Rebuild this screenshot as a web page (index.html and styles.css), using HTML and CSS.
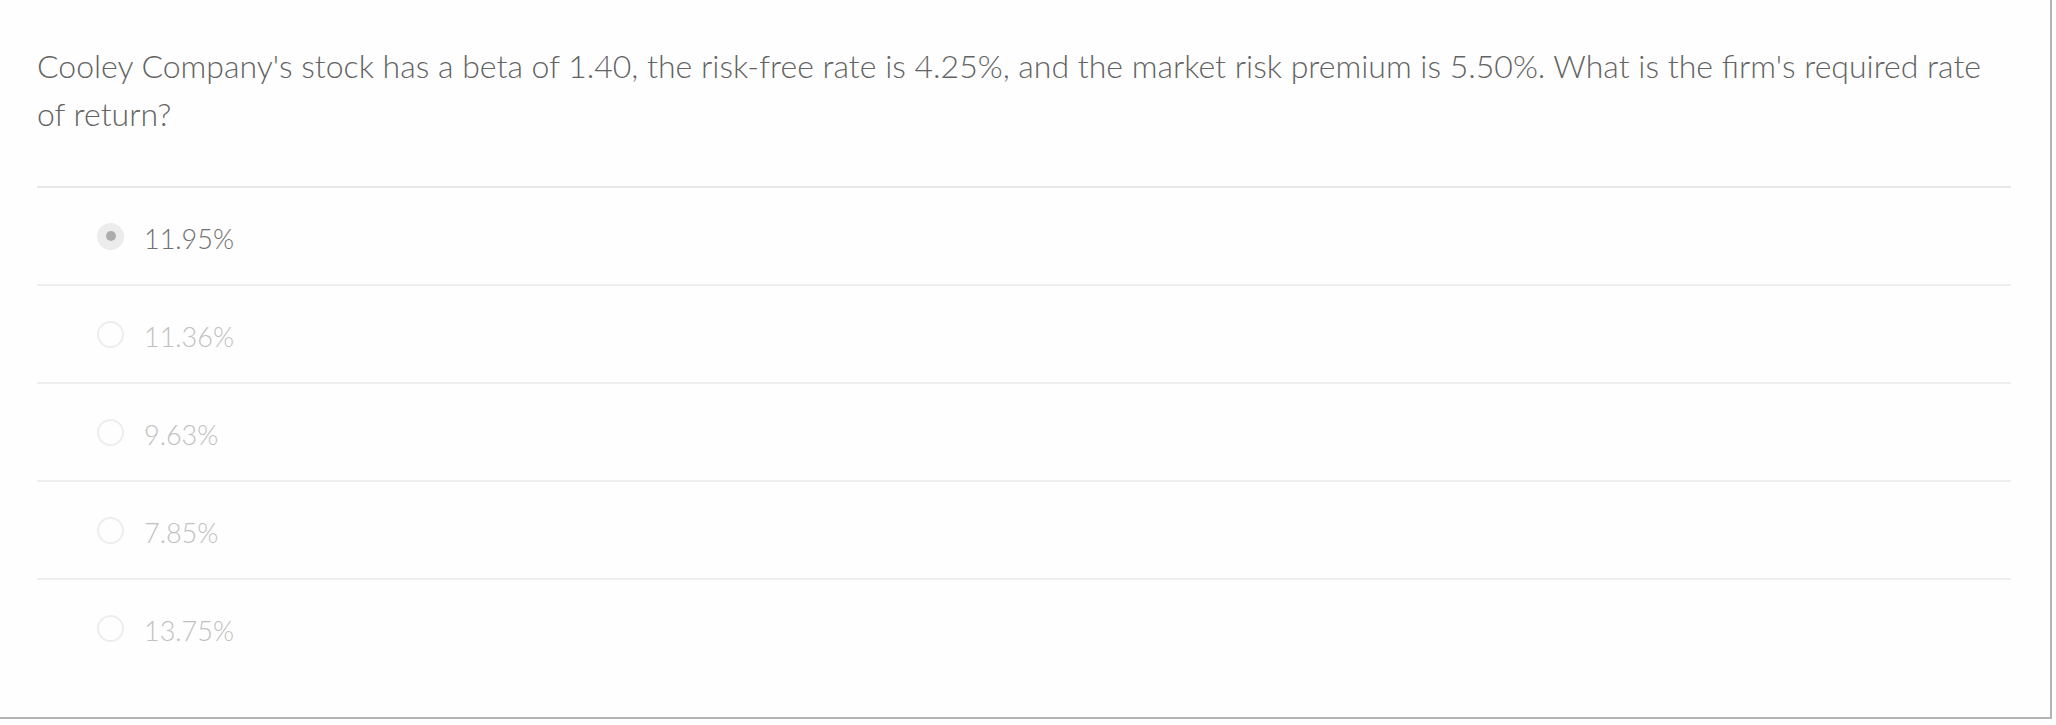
FILE: index.html
```html
<!DOCTYPE html>
<html lang="en">
<head>
<meta charset="utf-8">
<title>Question</title>
<link rel="stylesheet" href="styles.css">
</head>
<body>
<div class="frame">
  <div class="question">
    <p class="prompt">Cooley Company's stock has a beta of 1.40, the risk-free rate is 4.25%, and the market risk premium is 5.50%. What is the firm's required rate of return?</p>
    <ul class="options">
      <li class="option selected"><span class="radio"><span class="dot"></span></span><span class="label">11.95%</span></li>
      <li class="option"><span class="radio"></span><span class="label">11.36%</span></li>
      <li class="option"><span class="radio"></span><span class="label">9.63%</span></li>
      <li class="option"><span class="radio"></span><span class="label">7.85%</span></li>
      <li class="option"><span class="radio"></span><span class="label">13.75%</span></li>
    </ul>
  </div>
</div>
</body>
</html>
```
FILE: styles.css
```css
html, body {
  margin: 0;
  padding: 0;
  background: #ffffff;
}
body {
  font-family: Lato, "Open Sans", "Liberation Sans", sans-serif;
  font-weight: 300;
}
.frame {
  box-sizing: border-box;
  width: 2052px;
  height: 719px;
  background: #fefefe;
  border-right: 2px solid #b4b4b4;
  border-bottom: 2px solid #b4b4b4;
}
.question {
  padding: 42px 39px 0 37px;
}
.prompt {
  margin: 0;
  font-size: 32px;
  line-height: 48px;
  color: #636363;
  padding-bottom: 48px;
  border-bottom: 2px solid #e8e8e8;
}
.options {
  list-style: none;
  margin: 0;
  padding: 0;
}
.option {
  display: flex;
  align-items: center;
  height: 96px;
  padding-left: 60px;
  border-bottom: 2px solid #efefef;
}
.option:last-child {
  border-bottom: none;
}
.radio {
  box-sizing: border-box;
  width: 27px;
  height: 27px;
  border-radius: 50%;
  border: 2px solid #ededed;
  display: flex;
  align-items: center;
  justify-content: center;
  flex: none;
}
.selected .radio {
  background: #ececec;
  border-color: #ececec;
}
.dot {
  width: 10px;
  height: 10px;
  border-radius: 50%;
  background: #adadad;
}
.label {
  margin-left: 20px;
  padding-top: 4px;
  font-size: 27px;
  color: #c0c0c0;
}
.selected .label {
  color: #707070;
}
```
